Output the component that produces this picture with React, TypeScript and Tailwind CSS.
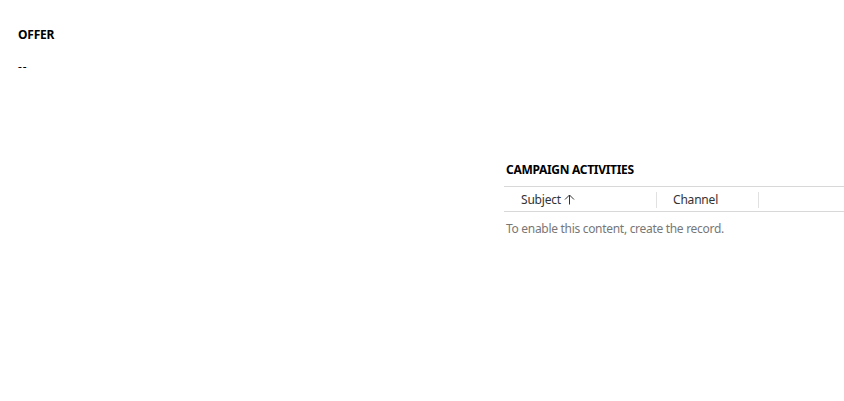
import React from "react";

export default function App() {
  return (
    <div className="w-[844px] h-[401px] bg-white flex" style={{ fontFamily: '"Segoe UI", "Noto Sans", "Liberation Sans", sans-serif' }}>
      <div className="w-[504px] pl-[18px] pt-[27px]">
        <div className="text-[12px] font-bold text-black leading-[16px] tracking-[-0.2px]">OFFER</div>
        <div className="text-[12px] text-black leading-[16px] mt-[16px] tracking-[1px]">--</div>
      </div>
      <div className="flex-1 pt-[161px]">
        <div className="pl-[2px] text-[12px] font-bold text-black leading-[18px] h-[25px] tracking-[-0.3px]">CAMPAIGN ACTIVITIES</div>
        <div className="border-t border-b border-[#d8d8d8] h-[26px] flex items-center text-[12px] text-[#333] tracking-[-0.2px] pt-[1px]">
          <div className="w-[153px] pl-[17px] flex items-center gap-[3px] border-r border-[#e1e1e1] h-[16px]">
            <span>Subject</span>
            <svg width="11" height="11" viewBox="0 0 11 11" fill="none" stroke="#333" strokeWidth="1">
              <path d="M5.5 10.5V1M1 5.5L5.5 1l4.5 4.5" />
            </svg>
          </div>
          <div className="w-[102px] pl-[16px] border-r border-[#e1e1e1] h-[16px] flex items-center">Channel</div>
        </div>
        <div className="pl-[2px] pt-[9px] text-[12px] text-[#777] leading-[16px] tracking-[-0.3px]">To enable this content, create the record.</div>
      </div>
    </div>
  );
}
